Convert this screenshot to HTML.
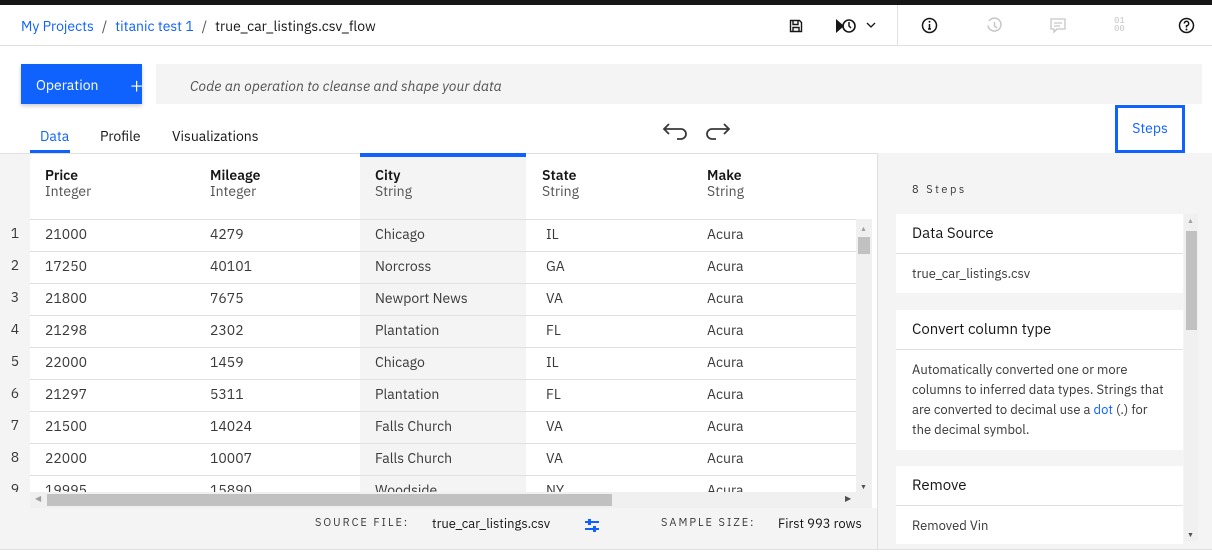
<!DOCTYPE html>
<html><head><style>
*{box-sizing:border-box;margin:0;padding:0}
body{width:1212px;height:557px;overflow:hidden;background:#fff;font-family:"IBM Plex Sans","Liberation Sans",sans-serif;color:#161616;position:relative;font-size:14px}
.a{position:absolute}
.top{left:0;top:0;width:1212px;height:5px;background:#161616}
.hdr{left:0;top:5px;width:1212px;height:41px;border-bottom:1px solid #e0e0e0}
.bc{left:21px;top:17px;font-size:14px;color:#161616}
.bc a{color:#0f62fe;text-decoration:none}
.bc .s{margin:0 8px;color:#525252}
.op{left:21px;top:64px;width:121px;height:40px;background:#0f62fe;color:#fff;font-size:14px;box-shadow:0 2px 4px rgba(0,0,0,.2)}
.inp{left:156px;top:64px;width:1046px;height:40px;background:#f4f4f4;font-style:italic;color:#525252;padding:13px 0 0 34px;font-size:14px}
.tab{top:127px;font-size:14px}
.steps{left:1115px;top:105px;width:70px;height:48px;border:3px solid #0f62fe;color:#0f62fe;text-align:center;padding-top:11px;font-size:14px}
.row{position:absolute;left:30px;width:826px;height:32px;border-top:1px solid #e0e0e0}
.c{position:absolute;top:5px;font-size:14px;color:#393939}
.n{position:absolute;left:0;width:30px;text-align:center;font-size:14px;color:#393939}
.card{position:absolute;left:896px;width:287px;background:#fff}
.ct{height:40px;border-bottom:1px solid #e0e0e0;padding:10px 16px;font-size:15px}
.cb{padding:10px 16px;font-size:13px;color:#393939;line-height:20px}
</style></head><body>
<div class="a top"></div>
<div class="a hdr"></div>
<div class="a bc"><a>My Projects</a><span class="s">/</span><a>titanic test 1</a><span class="s">/</span>true_car_listings.csv_flow</div>
<div class="a" style="left:897px;top:5px;width:1px;height:40px;background:#e0e0e0"></div>
<svg class="a" style="left:789px;top:19px" width="14" height="14" viewBox="0 0 14 14"><path d="M1.5 1.5h9l2 2v9h-11z M4 1.5v4h5v-4 M4 12.5v-4h6v4" fill="none" stroke="#161616" stroke-width="1.4"/></svg>
<svg class="a" style="left:835px;top:17px" width="22" height="18" viewBox="0 0 22 18"><path d="M1 2l8 7-8 7z" fill="#161616"/><circle cx="14" cy="9" r="6" fill="none" stroke="#161616" stroke-width="1.6"/><path d="M14 5v4l2 2" stroke="#161616" stroke-width="1.5" fill="none"/></svg>
<svg class="a" style="left:866px;top:22px" width="10" height="7"><path d="M1 1l4 4 4-4" stroke="#161616" fill="none" stroke-width="1.3"/></svg>
<svg class="a" style="left:921px;top:17px" width="17" height="17"><circle cx="8.5" cy="8.5" r="7" fill="none" stroke="#161616" stroke-width="1.5"/><path d="M8.5 7v5M7 12h3" stroke="#161616" stroke-width="1.5"/><circle cx="8.5" cy="4.7" r="1" fill="#161616"/></svg>
<svg class="a" style="left:986px;top:17px" width="17" height="17"><path d="M3 4A6.5 6.5 0 1 1 2 8.5" fill="none" stroke="#c6c6c6" stroke-width="1.5"/><path d="M8.5 5v4l2.5 2" stroke="#c6c6c6" stroke-width="1.5" fill="none"/></svg>
<svg class="a" style="left:1050px;top:18px" width="16" height="16"><path d="M1 1h14v10H7l-3 3v-3H1z M4 5h8M4 8h6" fill="none" stroke="#c6c6c6" stroke-width="1.3"/></svg>
<div class="a" style="left:1114px;top:17px;font-size:9px;color:#c6c6c6;line-height:8px;font-family:'Liberation Mono',monospace">01<br>00</div>
<svg class="a" style="left:1178px;top:17px" width="17" height="17"><circle cx="8.5" cy="8.5" r="7" fill="none" stroke="#161616" stroke-width="1.5"/><path d="M6.3 6.5a2.2 2.2 0 1 1 2.2 2.2v1.8" fill="none" stroke="#161616" stroke-width="1.5"/><circle cx="8.5" cy="12.5" r="1" fill="#161616"/></svg>

<div class="a op"><span class="a" style="left:15px;top:12px">Operation</span><span class="a" style="left:109px;top:7px;font-size:22px;font-weight:300">+</span></div>
<div class="a inp">Code an operation to cleanse and shape your data</div>
<div class="a tab" style="left:40px;color:#0f62fe">Data</div>
<div class="a tab" style="left:100px">Profile</div>
<div class="a tab" style="left:172px">Visualizations</div>
<div class="a" style="left:0;top:153px;width:878px;height:1px;background:#e0e0e0"></div>
<div class="a" style="left:30px;top:150px;width:40px;height:3px;background:#0f62fe"></div>
<svg class="a" style="left:661px;top:121px" width="28" height="20"><path d="M8 3L3 8l5 5M3 8h17a5 5 0 0 1 0 10h-4" fill="none" stroke="#393939" stroke-width="1.8"/></svg>
<svg class="a" style="left:704px;top:121px" width="28" height="20"><path d="M20 3l5 5-5 5M25 8H8a5 5 0 0 0 0 10h4" fill="none" stroke="#393939" stroke-width="1.8"/></svg>
<div class="a steps">Steps</div>

<div class="a" style="left:0;top:154px;width:30px;height:354px;background:#f4f4f4"></div>
<div class="a" style="left:360px;top:153px;width:166px;height:339px;background:#f4f4f4"></div>
<div class="a" style="left:360px;top:153px;width:166px;height:4px;background:#0f62fe"></div>
<div class="a" style="left:45px;top:167px;line-height:16px"><b style="font-weight:600">Price</b><br><span style="color:#525252">Integer</span></div>
<div class="a" style="left:210px;top:167px;line-height:16px"><b style="font-weight:600">Mileage</b><br><span style="color:#525252">Integer</span></div>
<div class="a" style="left:375px;top:167px;line-height:16px"><b style="font-weight:600">City</b><br><span style="color:#525252">String</span></div>
<div class="a" style="left:542px;top:167px;line-height:16px"><b style="font-weight:600">State</b><br><span style="color:#525252">String</span></div>
<div class="a" style="left:707px;top:167px;line-height:16px"><b style="font-weight:600">Make</b><br><span style="color:#525252">String</span></div>

<div class="a" style="left:0;top:219px;width:856px;height:273px;overflow:hidden">
<div style="position:absolute;left:0;top:0;width:856px">
<div class="row" style="top:0"><span class="c" style="left:15px">21000</span><span class="c" style="left:180px">4279</span><span class="c" style="left:345px">Chicago</span><span class="c" style="left:516px">IL</span><span class="c" style="left:677px">Acura</span></div>
<div class="row" style="top:32px"><span class="c" style="left:15px">17250</span><span class="c" style="left:180px">40101</span><span class="c" style="left:345px">Norcross</span><span class="c" style="left:516px">GA</span><span class="c" style="left:677px">Acura</span></div>
<div class="row" style="top:64px"><span class="c" style="left:15px">21800</span><span class="c" style="left:180px">7675</span><span class="c" style="left:345px">Newport News</span><span class="c" style="left:516px">VA</span><span class="c" style="left:677px">Acura</span></div>
<div class="row" style="top:96px"><span class="c" style="left:15px">21298</span><span class="c" style="left:180px">2302</span><span class="c" style="left:345px">Plantation</span><span class="c" style="left:516px">FL</span><span class="c" style="left:677px">Acura</span></div>
<div class="row" style="top:128px"><span class="c" style="left:15px">22000</span><span class="c" style="left:180px">1459</span><span class="c" style="left:345px">Chicago</span><span class="c" style="left:516px">IL</span><span class="c" style="left:677px">Acura</span></div>
<div class="row" style="top:160px"><span class="c" style="left:15px">21297</span><span class="c" style="left:180px">5311</span><span class="c" style="left:345px">Plantation</span><span class="c" style="left:516px">FL</span><span class="c" style="left:677px">Acura</span></div>
<div class="row" style="top:192px"><span class="c" style="left:15px">21500</span><span class="c" style="left:180px">14024</span><span class="c" style="left:345px">Falls Church</span><span class="c" style="left:516px">VA</span><span class="c" style="left:677px">Acura</span></div>
<div class="row" style="top:224px"><span class="c" style="left:15px">22000</span><span class="c" style="left:180px">10007</span><span class="c" style="left:345px">Falls Church</span><span class="c" style="left:516px">VA</span><span class="c" style="left:677px">Acura</span></div>
<div class="row" style="top:256px"><span class="c" style="left:15px">19995</span><span class="c" style="left:180px">15890</span><span class="c" style="left:345px">Woodside</span><span class="c" style="left:516px">NY</span><span class="c" style="left:677px">Acura</span></div>
<span class="n" style="top:5px">1</span><span class="n" style="top:37px">2</span><span class="n" style="top:69px">3</span><span class="n" style="top:101px">4</span><span class="n" style="top:133px">5</span><span class="n" style="top:165px">6</span><span class="n" style="top:197px">7</span><span class="n" style="top:229px">8</span><span class="n" style="top:261px">9</span>
</div></div>
<div class="a" style="left:856px;top:219px;width:16px;height:273px;background:#f0f0f0"></div>
<div class="a" style="left:858px;top:237px;width:12px;height:17px;background:#c1c1c1"></div>
<div class="a" style="left:860px;top:224px;font-size:7px;color:#a0a0a0">▲</div>
<div class="a" style="left:860px;top:482px;font-size:7px;color:#505050">▼</div>
<div class="a" style="left:30px;top:492px;width:842px;height:16px;background:#f0f0f0"></div>
<div class="a" style="left:47px;top:494px;width:565px;height:12px;background:#c1c1c1"></div>
<div class="a" style="left:35px;top:494px;font-size:8px;color:#a0a0a0">◀</div>
<div class="a" style="left:845px;top:494px;font-size:8px;color:#505050">▶</div>
<div class="a" style="left:0;top:508px;width:878px;height:41px;background:#f4f4f4"></div>
<div class="a" style="left:315px;top:516px;font-size:11px;letter-spacing:2px;color:#393939">SOURCE FILE:</div>
<div class="a" style="left:432px;top:515px;font-size:13px;color:#161616">true_car_listings.csv</div>
<svg class="a" style="left:584px;top:517px" width="16" height="18"><path d="M1 5h14M1 12h14" stroke="#0f62fe" stroke-width="2"/><rect x="4" y="2" width="3" height="6" fill="#0f62fe"/><rect x="9" y="9" width="3" height="6" fill="#0f62fe"/></svg>
<div class="a" style="left:661px;top:516px;font-size:11px;letter-spacing:2px;color:#393939">SAMPLE SIZE:</div>
<div class="a" style="left:778px;top:515px;font-size:13px;color:#161616">First 993 rows</div>

<div class="a" style="left:877px;top:153px;width:335px;height:396px;background:#f4f4f4;border-left:1px solid #e0e0e0"></div>
<div class="a" style="left:912px;top:183px;font-size:11px;letter-spacing:2.5px;color:#393939">8 Steps</div>
<div class="card" style="top:214px"><div class="ct">Data Source</div><div class="cb" style="padding-top:10px;height:39px">true_car_listings.csv</div></div>
<div class="card" style="top:310px"><div class="ct">Convert column type</div><div class="cb" style="height:100px">Automatically converted one or more columns to inferred data types. Strings that are converted to decimal use a <span style="color:#0f62fe">dot</span> (.) for the decimal symbol.</div></div>
<div class="card" style="top:466px"><div class="ct">Remove</div><div class="cb" style="height:38px">Removed Vin</div></div>
<div class="a" style="left:1184px;top:214px;width:14px;height:327px;background:#f0f0f0"></div>
<div class="a" style="left:1186px;top:231px;width:11px;height:99px;background:#c1c1c1"></div>
<div class="a" style="left:1187px;top:216px;font-size:7px;color:#a0a0a0">▲</div>
<div class="a" style="left:1187px;top:530px;font-size:7px;color:#505050">▼</div>
<div class="a" style="left:0;top:549px;width:1212px;height:8px;background:#fff;border-top:1px solid #e0e0e0"></div>
</body></html>
